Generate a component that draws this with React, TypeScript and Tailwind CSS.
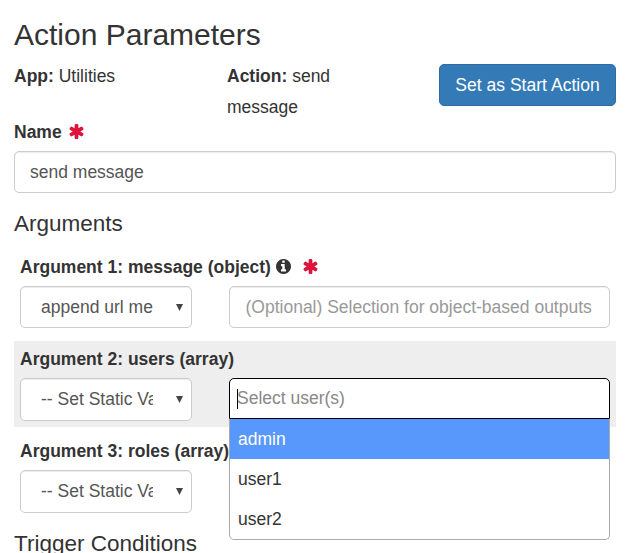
import type { ReactNode } from "react";

function Asterisk() {
  return (
    <svg viewBox="128 128 1536 1536" className="h-[15px] w-[15px] fill-[#dc143c]" aria-label="required">
      <path d="M1546 1050q46 26 59.5 77.5t-12.5 97.5l-64 110q-26 46-77.5 59.5t-97.5-12.5l-266-153v307q0 52-38 90t-90 38h-128q-52 0-90-38t-38-90v-307l-266 153q-46 26-97.5 12.5t-77.5-59.5l-64-110q-26-46-12.5-97.5t59.5-77.5l266-154-266-154q-46-26-59.5-77.5t12.5-97.5l64-110q26-46 77.5-59.5t97.5 12.5l266 153v-307q0-52 38-90t90-38h128q52 0 90 38t38 90v307l266-153q46-26 97.5-12.5t77.5 59.5l64 110q26 46 12.5 97.5t-59.5 77.5l-266 154z" />
    </svg>
  );
}

function InfoCircle() {
  return (
    <svg viewBox="128 128 1536 1536" className="h-[15px] w-[15px] fill-[#333]" aria-label="info">
      <path d="M1152 1376v-160q0-14-9-23t-23-9h-96v-512q0-14-9-23t-23-9h-320q-14 0-23 9t-9 23v160q0 14 9 23t23 9h96v320h-96q-14 0-23 9t-9 23v160q0 14 9 23t23 9h448q14 0 23-9t9-23zm-128-896v-160q0-14-9-23t-23-9h-192q-14 0-23 9t-9 23v160q0 14 9 23t23 9h192q14 0 23-9t9-23zm640 416q0 209-103 385.5t-279.5 279.5-385.5 103-385.5-103-279.5-279.5-103-385.5 103-385.5 279.5-279.5 385.5-103 385.5 103 279.5 279.5 103 385.5z" />
    </svg>
  );
}

function Select({ value, tall }: { value: string; tall?: boolean }) {
  return (
    <div
      className={`${tall ? "h-[43px]" : "h-[42px]"} flex w-[172px] shrink-0 items-center justify-between rounded-[5px] border border-[#ccc] bg-white pr-2 pl-5 text-[#555] shadow-[inset_0_1px_1px_rgba(0,0,0,0.075)]`}
    >
      <span className="w-[112px] overflow-hidden whitespace-nowrap">{value}</span>
      <svg viewBox="0 0 7 7" className="h-[7px] w-[7px] fill-[#444]">
        <path d="M0 0h7L3.5 7z" />
      </svg>
    </div>
  );
}

interface ArgumentProps {
  label: string;
  icons?: ReactNode;
  shaded?: boolean;
  children: ReactNode;
}

function Argument({ label, icons, shaded, children }: ArgumentProps) {
  return (
    <section className={`${shaded ? "bg-[#eee]" : "bg-white"} h-[86px] px-1.5 pt-[5px]`}>
      <div className="flex h-[25px] items-center font-bold whitespace-nowrap">
        <span className="pt-0.5">{label}</span>
        {icons}
      </div>
      <div className="mt-[7px] flex gap-[37px]">{children}</div>
    </section>
  );
}

export default function App() {
  return (
    <main className="h-[553px] w-[631px] overflow-hidden bg-white px-3.5 font-['Liberation_Sans',Arial,sans-serif] text-[17.5px] leading-[25px] text-[#333]">
      <div className="w-[602px]">
        <h3 className="pt-[18px] text-[30px] leading-[33px]">Action Parameters</h3>
        <div className="mt-[10px] flex h-[61px] leading-[31px]">
          <div className="w-[213px]">
            <b>App:</b> Utilities
          </div>
          <div className="w-[150px]">
            <b>Action:</b> send message
          </div>
          <button className="mt-[3px] ml-auto h-[42px] w-[177px] rounded-[5px] border border-[#2e6da4] bg-[#337ab7] leading-[25px] tracking-[0.03px] whitespace-nowrap text-white">
            Set as Start Action
          </button>
        </div>
        <label className="mt-[-3px] flex h-[25px] items-center gap-[7px] font-bold">
          <span className="pt-0.5">Name</span>
          <Asterisk />
        </label>
        <div className="mt-[7px] flex h-[42px] items-center rounded-[5px] border border-[#ccc] px-[15px] text-[#555] shadow-[inset_0_1px_1px_rgba(0,0,0,0.075)]">
          send message
        </div>
        <h4 className="mt-[18px] text-[22.5px] leading-[25px]">Arguments</h4>
        <div className="mt-[13px] flex flex-col gap-1.5">
          <Argument
            label="Argument 1: message (object)"
            icons={
              <>
                <span className="ml-[5px]">
                  <InfoCircle />
                </span>
                <span className="ml-[12px]">
                  <Asterisk />
                </span>
              </>
            }
          >
            <Select value="append url me" />
            <div className="flex h-[42px] w-[381px] items-center rounded-[5px] border border-[#ccc] px-[15.5px] whitespace-nowrap text-[#999] shadow-[inset_0_1px_1px_rgba(0,0,0,0.075)]">
              (Optional) Selection for object-based outputs
            </div>
          </Argument>
          <Argument shaded label="Argument 2: users (array)">
            <Select tall value="-- Set Static Value --" />
            <div className="relative h-[41px] w-[381px] rounded-t-[5px] border border-black bg-white">
              <div className="flex h-[39px] items-center pl-[7px] text-[#888]">
                <span className="-mr-px h-5 w-px bg-black" />
                Select user(s)
              </div>
              <ul className="absolute top-10 -left-px z-10 h-[121px] w-[381px] overflow-hidden rounded-b-[5px] border border-t-0 border-[#aaa] bg-white leading-10">
                <li className="bg-[#5897fb] pl-2 text-white">admin</li>
                <li className="pl-2">user1</li>
                <li className="pl-2">user2</li>
              </ul>
            </div>
          </Argument>
          <Argument label="Argument 3: roles (array)">
            <Select tall value="-- Set Static Value --" />
          </Argument>
        </div>
        <h4 className="mt-[12px] text-[22.5px] leading-[25px]">Trigger Conditions</h4>
      </div>
    </main>
  );
}
